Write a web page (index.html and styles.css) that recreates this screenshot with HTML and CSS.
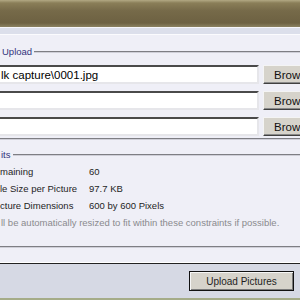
FILE: index.html
```html
<!DOCTYPE html>
<html lang="en">
<head>
    <meta charset="UTF-8">
    <meta name="viewport" content="width=device-width, initial-scale=1.0">
    <title>Upload Pictures</title>
    <link rel="stylesheet" href="styles.css">
</head>
<body>

<div class="titlebar"></div>
<div class="band"></div>

<form class="upload-form">
    <fieldset class="group files">
        <legend>Upload</legend>
        <div class="file-row">
            <input type="text" class="path" value="lk capture\0001.jpg">
            <button type="button" class="browse">Brow</button>
        </div>
        <div class="file-row">
            <input type="text" class="path" value="">
            <button type="button" class="browse">Brow</button>
        </div>
        <div class="file-row">
            <input type="text" class="path" value="">
            <button type="button" class="browse">Brow</button>
        </div>
    </fieldset>

    <fieldset class="group limits">
        <legend>its</legend>
        <div class="limit-row">
            <span class="label">maining</span>
            <span class="value">60</span>
        </div>
        <div class="limit-row">
            <span class="label">le Size per Picture</span>
            <span class="value">97.7 KB</span>
        </div>
        <div class="limit-row">
            <span class="label">cture Dimensions</span>
            <span class="value">600 by 600 Pixels</span>
        </div>
        <p class="note">ll be automatically resized to fit within these constraints if possible.</p>
    </fieldset>
</form>

<div class="actions">
    <button type="button" class="submit">Upload Pictures</button>
</div>

</body>
</html>
```

FILE: styles.css
```css
body {
    font-family: "Liberation Sans", Arial, sans-serif;
    background-color: #efeff7;
    color: #1e1e1e;
    margin: 0;
    padding: 0;
    width: 300px;
    height: 300px;
    overflow: hidden;
    display: flex;
    flex-direction: column;
}
.titlebar {
    height: 27px;
    flex: none;
    background: linear-gradient(#b2a984 0, #8a7e58 3px, #766a49 40%, #6d6142 85%, #8b8261 100%);
}
.band {
    height: 6px;
    flex: none;
    background-color: #dcdfeb;
    border-top: 1px solid #f6f6fb;
    border-bottom: 1px solid #fbfbfe;
}
.upload-form {
    flex: 1;
    margin: 0;
    padding: 11px 0 0;
    border-bottom: 1px solid #ffffff;
}
.group {
    margin: 0 -20px 0 -10px;
    padding: 7px 0 2px 5px;
    border: 2px groove #cfcfd8;
    min-width: 0;
}
.group legend {
    font-size: 9.5px;
    line-height: 12px;
    color: #33337c;
    padding: 0 2px;
    margin-left: 3px;
}
.file-row {
    display: flex;
    gap: 4px;
    margin-bottom: 7px;
}
.file-row:last-child {
    margin-bottom: 0;
}
.path {
    flex: none;
    width: 262px;
    height: 19px;
    box-sizing: border-box;
    margin: 0;
    padding: 0 2px;
    font-family: "Liberation Sans", Arial, sans-serif;
    font-size: 11.5px;
    color: #000;
    background-color: #fff;
    border: 2px solid;
    border-color: #4a4a4a #e6e6ea #e6e6ea #4a4a4a;
    outline: none;
}
.browse {
    flex: none;
    width: 60px;
    height: 19px;
    box-sizing: border-box;
    margin: 0;
    padding: 0 0 0 10px;
    text-align: left;
    font-family: "Liberation Sans", Arial, sans-serif;
    font-size: 11.5px;
    color: #111;
    background-color: #d6d3cb;
    border: 1px solid;
    border-color: #f4f4f4 #404040 #404040 #f4f4f4;
    box-shadow: inset -1px -1px 0 #8a8a8a;
}
.limits {
    margin-top: 9px;
    padding: 2px 0 15px 5px;
}
.limits legend {
    margin-left: 2px;
}
.limit-row {
    display: grid;
    grid-template-columns: 92px 1fr;
    height: 17px;
    align-items: center;
    font-size: 9.5px;
}
.label {
    padding-left: 3px;
}
.note {
    margin: 0;
    height: 17px;
    line-height: 17px;
    padding-left: 4px;
    font-size: 9.5px;
    color: #8a8a8e;
    white-space: nowrap;
}
.actions {
    flex: none;
    height: 37px;
    box-sizing: border-box;
    display: flex;
    justify-content: flex-end;
    align-items: flex-start;
    padding: 7px 6px 0 0;
    background-color: #d6d9e4;
    border-top: 1px solid #222;
    border-bottom: 2px solid #a5ac88;
}
.submit {
    width: 105px;
    height: 20px;
    margin: 0;
    padding: 0;
    font-family: "Liberation Sans", Arial, sans-serif;
    font-size: 10px;
    color: #1e1e1e;
    background-color: #d6d3cb;
    border: 1px solid #111;
    box-shadow: inset 1px 1px 0 #f6f6f6, inset -1px -1px 0 #7a7a7a;
}
```
